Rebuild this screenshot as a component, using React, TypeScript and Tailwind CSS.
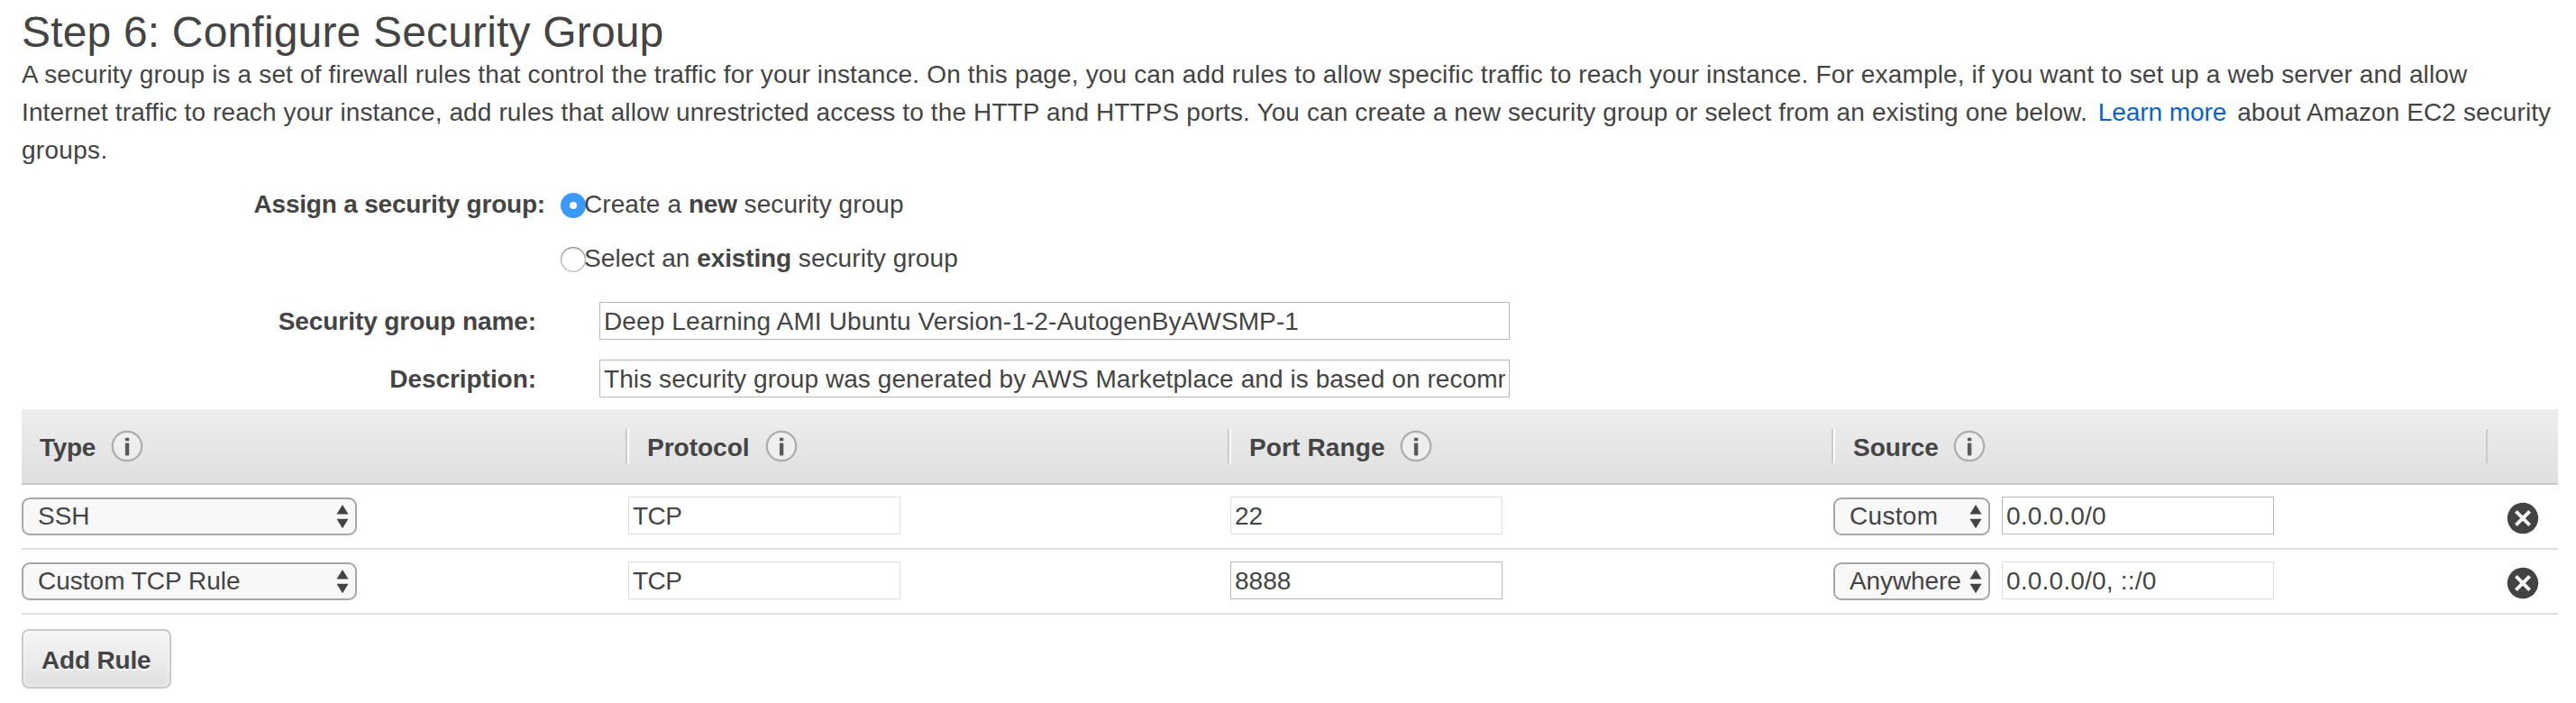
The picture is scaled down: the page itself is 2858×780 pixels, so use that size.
import React from "react";

function InfoIcon({ className }: { className: string }) {
  return (
    <svg viewBox="0 0 36 36" className={`h-9 w-9 shrink-0 ${className}`}>
      <circle cx="18" cy="18" r="16.2" fill="#eeeeee" stroke="#acacac" strokeWidth="2.2" />
      <rect x="15.9" y="8.8" width="4.4" height="3.4" rx="1" fill="#5a5a5a" />
      <rect x="15.9" y="14.4" width="4.4" height="14" rx="1" fill="#5a5a5a" />
    </svg>
  );
}

function DeleteIcon() {
  return (
    <svg viewBox="0 0 36 36" className="mt-[19px] ml-5 h-9 w-9">
      <circle cx="18" cy="18" r="17.2" fill="#434343" />
      <path d="M10.4 10.4 L25.6 25.6 M25.6 10.4 L10.4 25.6" stroke="#f6f6f6" strokeWidth="4" />
    </svg>
  );
}

function Radio({ checked = false }: { checked?: boolean }) {
  return (
    <svg viewBox="0 0 28 28" className="mt-[3px] h-7 w-7 shrink-0">
      <defs>
        <linearGradient id="radio-rim" x1="0" y1="0" x2="0" y2="1">
          <stop offset="0" stopColor="#8f8f8f" />
          <stop offset="1" stopColor="#bdbdbd" />
        </linearGradient>
        <linearGradient id="radio-face" x1="0" y1="0" x2="0" y2="1">
          <stop offset="0" stopColor="#ececec" />
          <stop offset="0.25" stopColor="#ffffff" />
        </linearGradient>
      </defs>
      {checked ? (
        <>
          <circle cx="14" cy="14" r="14" fill="#3b99fc" />
          <circle cx="14" cy="15" r="4.4" fill="#2c83e0" />
          <circle cx="14" cy="14" r="4.1" fill="#ffffff" />
        </>
      ) : (
        <circle cx="14" cy="14" r="13.4" fill="url(#radio-face)" stroke="url(#radio-rim)" strokeWidth="1.2" />
      )}
    </svg>
  );
}

function Select({ value, width, spacing = "" }: { value: string; width: string; spacing?: string }) {
  return (
    <div
      className={`flex h-[42px] shrink-0 justify-between rounded-[9px] border-2 border-[#a6a6a6] bg-[#f8f8f8] pt-[3px] pr-[7px] pl-4 ${width}`}
    >
      <span className={`whitespace-nowrap ${spacing}`}>{value}</span>
      <svg viewBox="0 0 14 28" className="mt-[2px] h-7 w-[14px] shrink-0">
        <path d="M7 1 L13.5 11.5 H0.5 Z M7 27.2 L13.5 16.7 H0.5 Z" fill="#434343" />
      </svg>
    </div>
  );
}

function Field({
  value,
  width = "w-[302px]",
  disabled = false,
  spacing = "",
}: {
  value: string;
  width?: string;
  disabled?: boolean;
  spacing?: string;
}) {
  return (
    <div
      className={`h-[42px] shrink-0 border bg-white px-1 pt-[5px] ${width} ${disabled ? "border-[#dedede]" : "border-[#b9b9b9]"}`}
    >
      <div className={`overflow-hidden whitespace-nowrap ${spacing}`}>{value}</div>
    </div>
  );
}

function HeadCell({
  title,
  width,
  iconGap,
  spacing = "",
}: {
  title: string;
  width: string;
  iconGap: string;
  spacing?: string;
}) {
  return (
    <div className={`flex h-[82px] shrink-0 ${width}`}>
      <span className={`mt-[27px] font-bold whitespace-nowrap ${spacing}`}>{title}</span>
      <InfoIcon className={`mt-[23px] ${iconGap}`} />
    </div>
  );
}

function Divider() {
  return <div className="mt-[22px] h-[38px] w-1 shrink-0 border-r-2 border-l-2 border-l-[#cccccc] border-r-white" />;
}

type Rule = {
  type: string;
  protocol: string;
  port: string;
  portLocked: boolean;
  source: string;
  cidr: string;
  cidrLocked: boolean;
};

const rules: Rule[] = [
  { type: "SSH", protocol: "TCP", port: "22", portLocked: true, source: "Custom", cidr: "0.0.0.0/0", cidrLocked: false },
  {
    type: "Custom TCP Rule",
    protocol: "TCP",
    port: "8888",
    portLocked: false,
    source: "Anywhere",
    cidr: "0.0.0.0/0, ::/0",
    cidrLocked: true,
  },
];

export default function App() {
  return (
    <div className="h-[780px] w-[2858px] overflow-hidden bg-white pt-[9px] pl-6 font-['Liberation_Sans',Arial,sans-serif] text-[28px] leading-[31px] text-[#444444]">
      <h1 className="text-[48px] leading-[53px] tracking-[0.17px]">Step 6: Configure Security Group</h1>
      <p className="leading-[42px] whitespace-nowrap">
        <span className="block tracking-[0.152px]">
          A security group is a set of firewall rules that control the traffic for your instance. On this page, you can
          add rules to allow specific traffic to reach your instance. For example, if you want to set up a web server
          and allow
        </span>
        <span className="block tracking-[0.12px]">
          Internet traffic to reach your instance, add rules that allow unrestricted access to the HTTP and HTTPS ports.
          You can create a new security group or select from an existing one below.
          <a className="ml-3 tracking-[-0.08px] text-[#0b62c1]">Learn more</a>
          <span className="ml-3 tracking-[0.1px]">about Amazon EC2 security</span>
        </span>
        <span className="block tracking-[0.3px]">groups.</span>
      </p>

      <div className="mt-[23px] flex">
        <div className="w-[581px] text-right font-bold tracking-[-0.2px]">Assign a security group:</div>
        <div className="ml-[17px] flex flex-col gap-[29px] tracking-[0.08px]">
          <div className="flex h-[31px]">
            <Radio checked />
            <span className="-ml-0.5">
              Create a <b className="tracking-[-0.2px]">new</b> security group
            </span>
          </div>
          <div className="flex h-[31px]">
            <Radio />
            <span className="-ml-0.5">
              Select an <b className="tracking-[-0.15px]">existing</b> security group
            </span>
          </div>
        </div>
      </div>

      <div className="mt-[33px] flex">
        <div className="mt-[6px] mr-[70px] w-[571px] text-right font-bold tracking-[-0.08px]">Security group name:</div>
        <Field value="Deep Learning AMI Ubuntu Version-1-2-AutogenByAWSMP-1" width="w-[1010px]" spacing="tracking-[0.12px]" />
      </div>
      <div className="mt-[22px] flex">
        <div className="mt-[6px] mr-[70px] w-[571px] text-right font-bold tracking-[-0.05px]">Description:</div>
        <Field
          value="This security group was generated by AWS Marketplace and is based on recommended settings"
          width="w-[1010px]"
          spacing="tracking-[0.08px]"
        />
      </div>

      <div className="mt-[13px] w-[2814px]">
        <div className="flex h-[84px] border-b-2 border-[#cacaca] bg-linear-to-b from-[#eeeeee] to-[#dfdfdf] pl-5">
          <HeadCell title="Type" width="w-[650px]" iconGap="ml-[17px]" spacing="tracking-[-0.3px]" />
          <Divider />
          <HeadCell title="Protocol" width="w-[644px] ml-5" iconGap="ml-[17px]" />
          <Divider />
          <HeadCell title="Port Range" width="w-[646px] ml-5" iconGap="ml-[16px]" spacing="tracking-[0.13px]" />
          <Divider />
          <HeadCell title="Source" width="w-[702px] ml-5" iconGap="ml-4" />
          <div className="mt-[22px] h-[38px] w-0.5 bg-[#cccccc]" />
        </div>

        {rules.map((rule) => (
          <div key={rule.type} className="flex h-[72px] border-b-2 border-[#dedede]">
            <div className="mt-[14px] w-[673px]">
              <Select value={rule.type} width="w-[372px]" />
            </div>
            <div className="mt-[13px] w-[668px]">
              <Field value={rule.protocol} disabled spacing="tracking-[-0.5px]" />
            </div>
            <div className="mt-[13px] w-[669px]">
              <Field value={rule.port} disabled={rule.portLocked} />
            </div>
            <div className="flex w-[727px] gap-[13px]">
              <div className="mt-[14px]">
                <Select
                  value={rule.source}
                  width="w-[174px]"
                  spacing={rule.source === "Custom" ? "tracking-[0.3px]" : "tracking-[-0.1px]"}
                />
              </div>
              <div className="mt-[13px]">
                <Field value={rule.cidr} disabled={rule.cidrLocked} spacing="tracking-[0.2px]" />
              </div>
            </div>
            <DeleteIcon />
          </div>
        ))}
      </div>

      <button className="mt-4 flex h-[66px] w-[166px] rounded-[8px] border-2 border-[#c9c9c9] bg-linear-to-b from-[#f6f6f6] to-[#e0e0e0] pt-[17px] pl-5 font-bold tracking-[-0.18px] whitespace-nowrap shadow-[inset_0_0_4px_1px_rgba(255,255,255,0.6)] [text-shadow:0_2px_0_#ffffff]">
        Add Rule
      </button>
    </div>
  );
}
